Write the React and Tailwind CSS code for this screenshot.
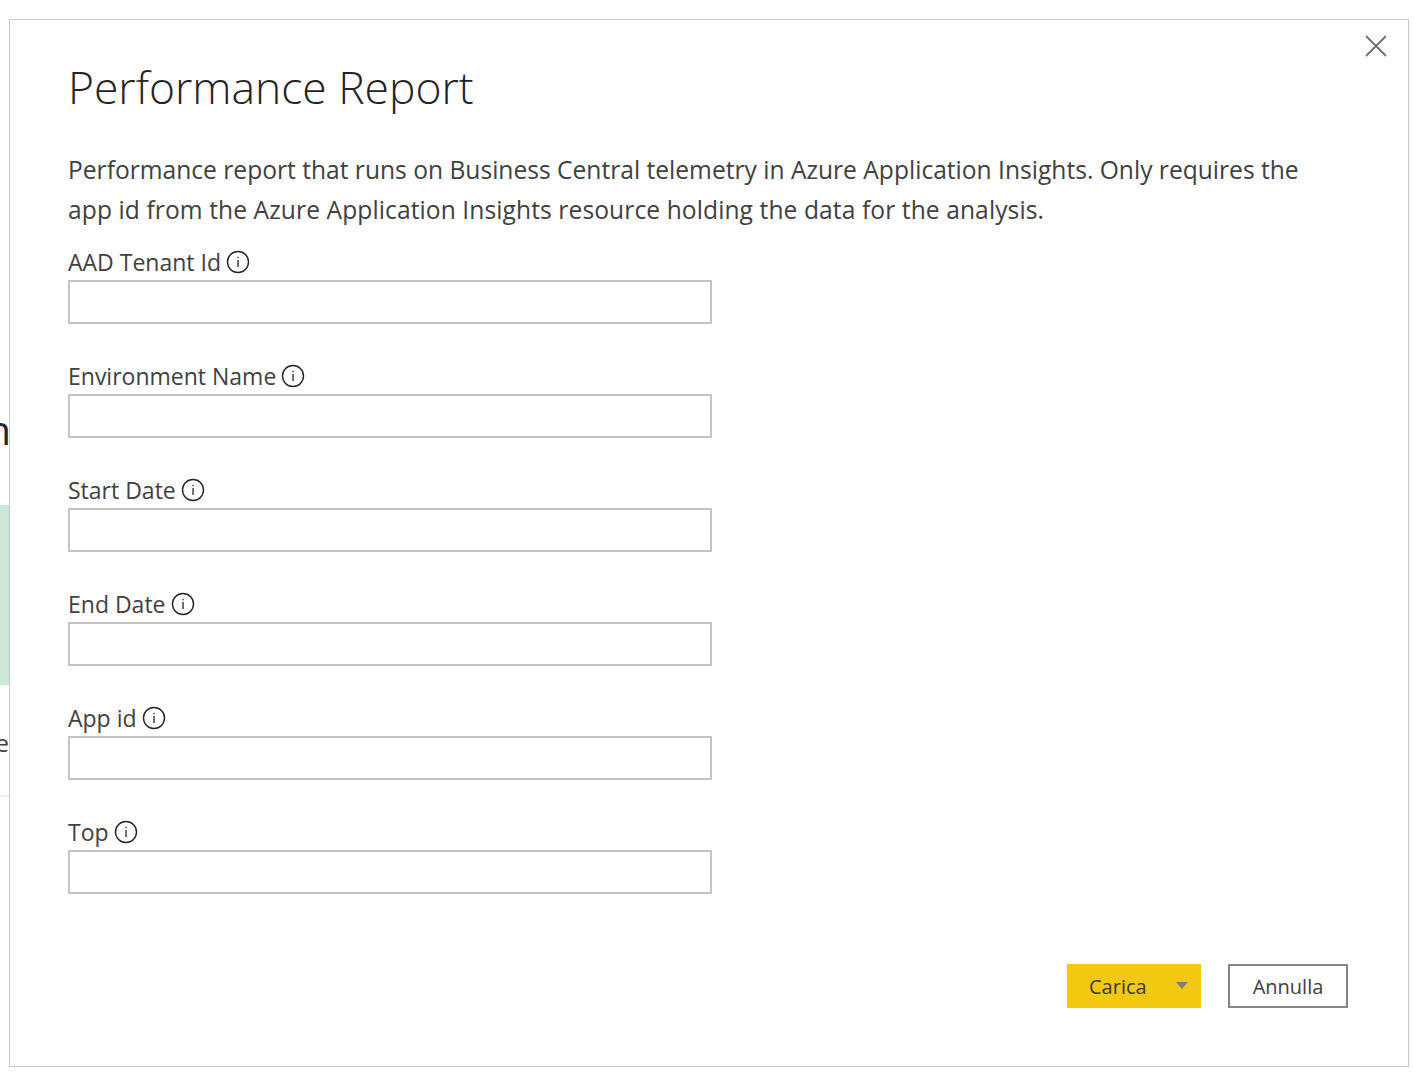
const FIELDS = ["AAD Tenant Id", "Environment Name", "Start Date", "End Date", "App id", "Top"];

function InfoIcon() {
  return (
    <svg width="24" height="24" viewBox="0 0 24 24" className="ml-[5px] shrink-0" fill="none">
      <circle cx="12" cy="12" r="10.5" stroke="#252423" strokeWidth="1.4" />
      <rect x="11.4" y="6.8" width="1.3" height="1.5" fill="#252423" />
      <rect x="11.4" y="10" width="1.3" height="7" fill="#252423" />
    </svg>
  );
}

function Field({ label }) {
  return (
    <div className="h-[114px]">
      <div className="flex h-[42px] items-center pt-[5px] text-[23px] leading-[32px] text-[#414141]">
        <span>{label}</span>
        <InfoIcon />
      </div>
      <div className="h-[44px] w-[644px] border-2 border-[#c4c4c4] bg-white" />
    </div>
  );
}

export default function App() {
  return (
    <div className="flex h-[1076px] w-[1414px] overflow-hidden bg-white pb-[9px] font-['Open_Sans','Noto_Sans',sans-serif]">
      <div className="relative w-[9px] shrink-0 overflow-hidden">
        <div className="h-[405px]" />
        <div className="flex h-[50px] justify-end text-[40px] leading-[50px] text-[#252423]"><span className="-mr-[2px]">n</span></div>
        <div className="h-[50px]" />
        <div className="h-[180px] bg-[#c9e8d7]" />
        <div className="h-[40px]" />
        <div className="flex h-[36px] justify-end text-[24px] leading-[36px] text-[#414141]"><span>e</span></div>
        <div className="h-[36px] border-b-2 border-[#eeeeee]" />
      </div>
      <div className="relative mt-[19px] h-[1048px] w-[1400px] shrink-0 border border-[#c8c8c8] bg-white pl-[58px]">
        <button className="absolute right-[20px] top-[14px] flex h-[24px] w-[24px] items-center justify-center" aria-label="Chiudi">
          <svg width="24" height="24" viewBox="0 0 24 24" fill="none">
            <path d="M2 2 L22 22 M22 2 L2 22" stroke="#707070" strokeWidth="1.8" />
          </svg>
        </button>
        <h1 className="pt-[35px] text-[44.4px] font-light leading-[64px] text-[#252423]">Performance Report</h1>
        <p className="mt-[31px] w-[1260px] text-[24.6px] leading-[40px] text-[#414141]">
          Performance report that runs on Business Central telemetry in Azure Application Insights. Only requires the <span className="tracking-[0.09px]">app id from the Azure Application Insights resource holding the data for the analysis.</span>
        </p>
        <div className="mt-[8px]">
          {FIELDS.map((f) => <Field key={f} label={f} />)}
        </div>
        <div className="mr-[60px] mt-[42px] flex justify-end gap-[27px]">
          <button className="flex h-[44px] w-[134px] items-center bg-[#f2c811] text-[20px] text-[#3b3a39]">
            <span className="ml-[22px] pt-[2px]">Carica</span>
            <svg width="12" height="7" viewBox="0 0 12 7" className="ml-auto mb-[1px] mr-[13px]"><path d="M0 0 H12 L6 7 Z" fill="#7f7f7f" /></svg>
          </button>
          <button className="h-[44px] w-[120px] border-2 border-[#858585] bg-white pt-[2px] text-[20px] text-[#414141]">Annulla</button>
        </div>
      </div>
    </div>
  );
}
